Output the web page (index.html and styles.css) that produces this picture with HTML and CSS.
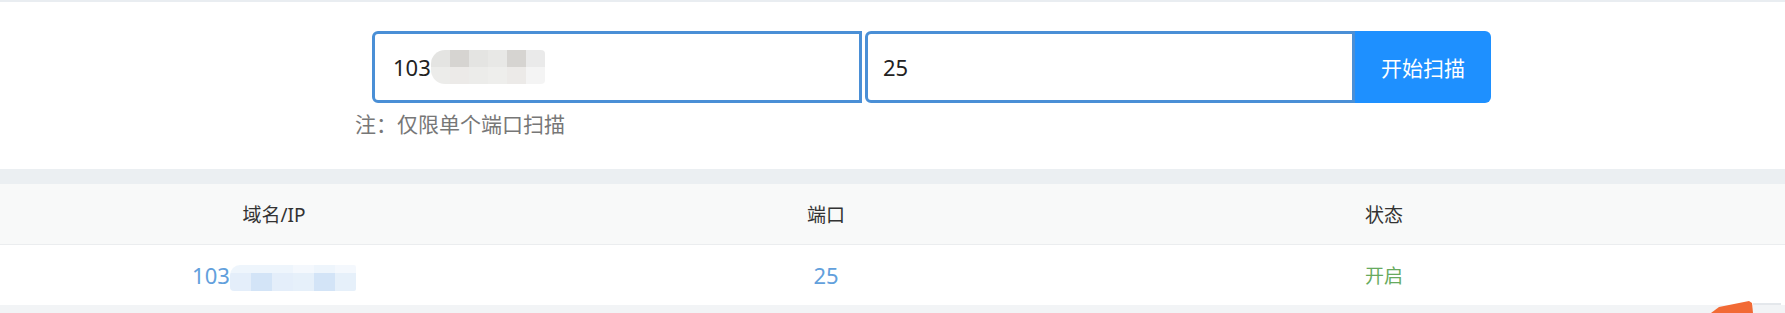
FILE: index.html
```html
<!DOCTYPE html>
<html lang="zh-CN">
<head>
<meta charset="utf-8">
<title>端口扫描</title>
<link rel="stylesheet" href="styles.css">
</head>
<body>
<div class="page">
  <section class="scan">
    <div class="form-row">
      <div class="field field-host">
        <span class="val">103</span>
        <span class="mosaic mosaic-gray">
          <i class="m1"></i><i class="m2"></i><i class="m1"></i><i class="m3"></i><i class="m2"></i><i class="m4"></i>
        </span>
      </div>
      <div class="field field-port"><span class="val">25</span></div>
      <button class="btn">开始扫描</button>
    </div>
    <p class="note">注：仅限单个端口扫描</p>
  </section>
  <div class="band"></div>
  <div class="table">
    <div class="thead">
      <div class="cell">域名/IP</div>
      <div class="cell">端口</div>
      <div class="cell">状态</div>
      <div class="cell"></div>
    </div>
    <div class="trow">
      <div class="cell ip"><span>103</span><span class="mosaic mosaic-blue"><i class="b1"></i><i class="b2"></i><i class="b1"></i><i class="b3"></i><i class="b2"></i><i class="b3"></i></span></div>
      <div class="cell port">25</div>
      <div class="cell on">开启</div>
      <div class="cell"></div>
    </div>
  </div>
  <div class="foot"></div>
  <svg class="mark" width="70" height="16" viewBox="0 0 70 16">
    <polygon points="0,16 8,10 38,4 41,6 42,16" fill="#f26a35"/>
    <line x1="42" y1="7" x2="70" y2="7" stroke="#c9d0d8" stroke-width="1"/>
  </svg>
</div>
</body>
</html>
```
FILE: styles.css
```css
* { box-sizing: border-box; }
html, body { margin: 0; padding: 0; background: #fff; }
body {
  font-family: "Noto Sans", "Noto Sans CJK SC", sans-serif;
  color: #333;
  width: 1785px;
  height: 313px;
  overflow: hidden;
}
.page { position: relative; height: 313px; }
.scan {
  height: 169px;
  border-top: 2px solid #e9edf1;
  padding: 29px 0 0 372px;
}
.form-row { display: flex; height: 72px; }
.field {
  display: flex;
  align-items: center;
  border: 3px solid #4a8fd6;
  background: #fff;
  font-size: 22px;
  color: #222;
}
.field-host {
  width: 490px;
  border-radius: 6px 0 0 6px;
  padding-left: 18px;
}
.field-port {
  width: 490px;
  margin-left: 3px;
  border-radius: 6px 0 0 6px;
  padding-left: 15px;
}
.btn {
  width: 136px;
  border: 0;
  background: #1e90ff;
  color: #fff;
  font-family: inherit;
  font-size: 21px;
  border-radius: 0 6px 6px 0;
  padding: 0;
}
.mosaic { display: inline-flex; height: 34px; border-radius: 14px 4px 4px 14px; overflow: hidden; }
.mosaic i { display: block; width: 19px; height: 100%; }
.mosaic-gray i.m1 { background: linear-gradient(#e4e4e2 50%, #ececea 50%); }
.mosaic-gray i.m2 { background: linear-gradient(#d6d4d1 50%, #eceae8 50%); }
.mosaic-gray i.m3 { background: linear-gradient(#e8e8e6 50%, #eeeeec 50%); }
.mosaic-gray i.m4 { background: linear-gradient(#eaeaea 50%, #f4f4f4 50%); }
.note {
  margin: 7px 0 0 -17px;
  font-size: 21px;
  color: #777;
  line-height: 28px;
}
.band { height: 15px; background: #ebeff2; }
.thead, .trow {
  display: grid;
  grid-template-columns: 548px 556px 560px 1fr;
  align-items: center;
}
.thead {
  height: 61px;
  background: #f8f9f9;
  border-bottom: 1px solid #ebedef;
  font-size: 19px;
  color: #333;
}
.trow { height: 60px; background: #fff; font-size: 22px; }
.cell { text-align: center; }
.ip, .port { color: #62a0dc; }
.ip { display: flex; justify-content: center; align-items: center; }
.mosaic-blue { height: 26px; margin-top: 6px; border-radius: 10px 2px 2px 4px; }
.mosaic-blue i { width: 21px; }
.mosaic-blue i.b1 { background: linear-gradient(#eef5fc 30%, #e4eefa 30%); }
.mosaic-blue i.b2 { background: linear-gradient(#eef5fc 30%, #d3e4f7 30%); }
.mosaic-blue i.b3 { background: linear-gradient(#f4f8fd 30%, #e6f0fa 30%); }
.on { color: #67aa5e; font-size: 19px; }
.foot { height: 8px; background: #f2f4f6; }
.mark { position: absolute; left: 1711px; top: 297px; }
```
